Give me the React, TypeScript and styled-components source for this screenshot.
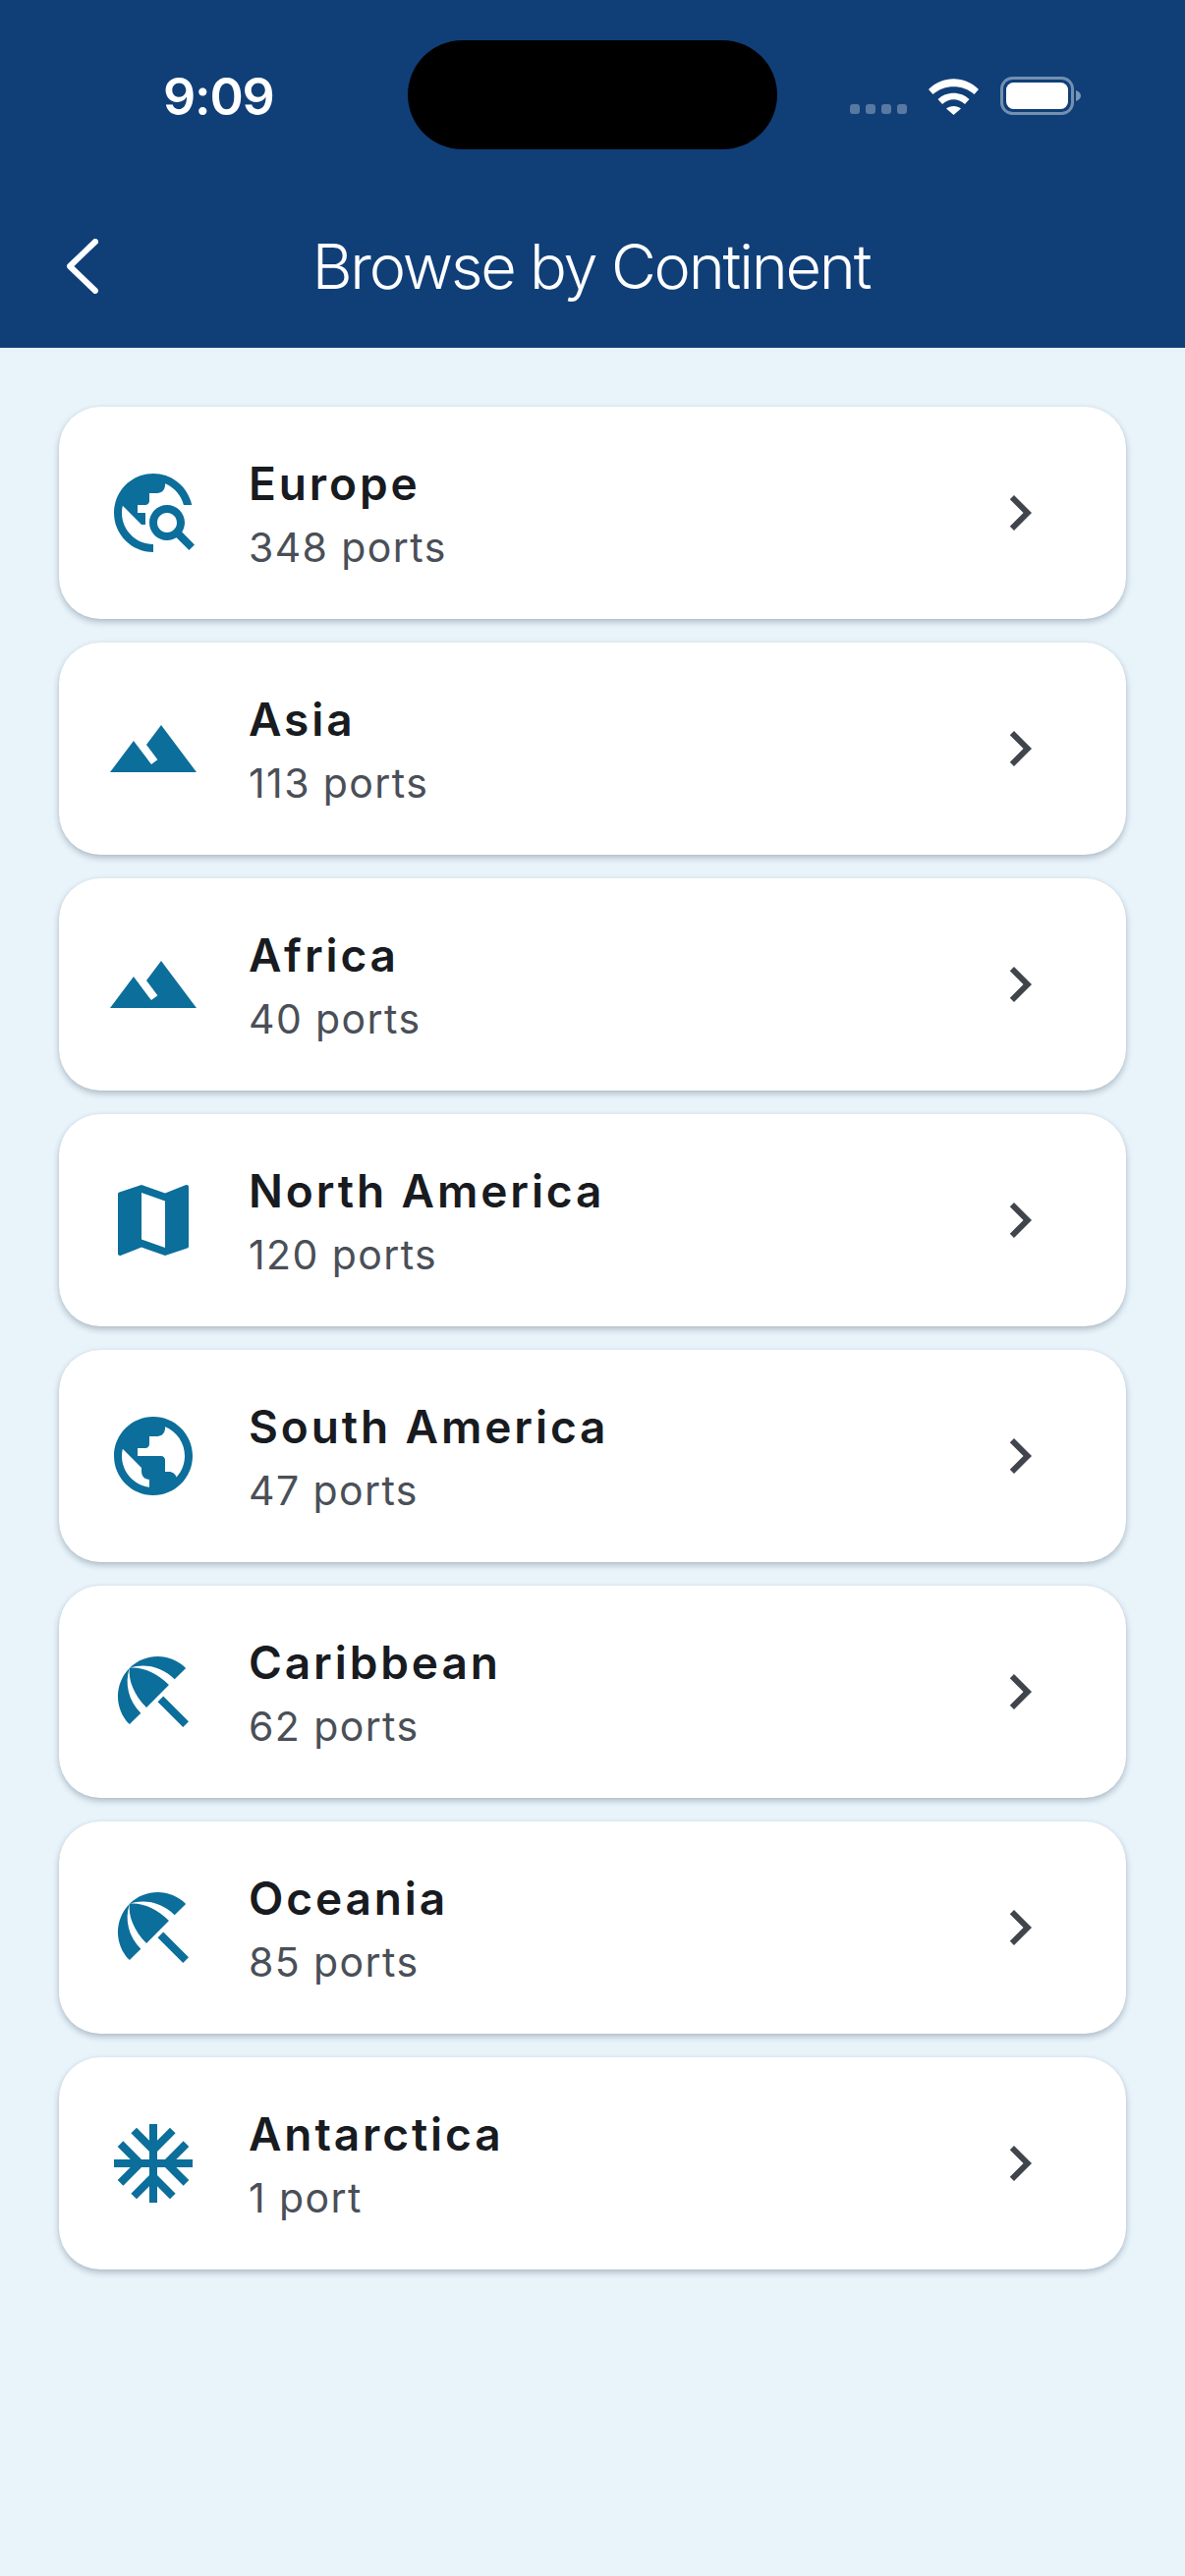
import React from 'react';
import styled, { createGlobalStyle } from 'styled-components';

const ICONS = {
    travelExplore: 'M19.3 16.9c.4-.7.7-1.5.7-2.4 0-2.5-2-4.5-4.5-4.5S11 12 11 14.5s2 4.5 4.5 4.5c.9 0 1.7-.3 2.4-.7l3.2 3.2 1.4-1.4-3.2-3.2zm-3.8.1c-1.4 0-2.5-1.1-2.5-2.5s1.1-2.5 2.5-2.5 2.5 1.1 2.5 2.5-1.1 2.5-2.5 2.5zM12 20v2C6.48 22 2 17.52 2 12S6.48 2 12 2c4.84 0 8.87 3.44 9.8 8h-2.07c-.64-2.46-2.4-4.47-4.73-5.41V5c0 1.1-.9 2-2 2h-2v2c0 .55-.45 1-1 1H8v2h2v3H9l-4.79-4.79C4.08 10.79 4 11.38 4 12c0 4.41 3.59 8 8 8z',
    landscape: 'M14 6l-3.75 5 2.85 3.8-1.6 1.2C9.81 13.75 7 10 7 10l-6 8h22L14 6z',
    map: 'M20.5 3l-.16.03L15 5.1 9 3 3.36 4.9c-.21.07-.36.25-.36.48V20.5c0 .28.22.5.5.5l.16-.03L9 18.9l6 2.1 5.64-1.9c.21-.07.36-.25.36-.48V3.5c0-.28-.22-.5-.5-.5zM15 19l-6-2.11V5l6 2.11V19z',
    publicGlobe: 'M12 2C6.48 2 2 6.48 2 12s4.48 10 10 10 10-4.48 10-10S17.52 2 12 2zm-1 17.93c-3.95-.49-7-3.85-7-7.93 0-.62.08-1.21.21-1.79L9 15v1c0 1.1.9 2 2 2v1.93zm6.9-2.54c-.26-.81-1-1.39-1.9-1.39h-1v-3c0-.55-.45-1-1-1H8v-2h2c.55 0 1-.45 1-1V7h2c1.1 0 2-.9 2-2v-.41c2.93 1.19 5 4.06 5 7.41 0 2.08-.8 3.97-2.1 5.39z',
    beach: 'M13.127 14.56l1.43-1.43 6.44 6.443L19.57 21zm4.293-5.73l2.86-2.86c-3.95-3.95-10.35-3.96-14.3-.02 3.93-1.3 8.31-.25 11.44 2.88zM5.95 5.98c-3.94 3.95-3.93 10.35.02 14.3l2.86-2.86C5.7 14.29 4.65 9.91 5.95 5.98zm.02-.02l-.01.01c-.38 3.01 1.17 6.88 4.3 10.02l5.73-5.73c-3.13-3.13-7.01-4.68-10.02-4.3z',
    snow: 'M22 11h-4.17l3.24-3.24-1.41-1.42L15 11h-2V9l4.66-4.66-1.42-1.41L13 6.17V2h-2v4.17L7.76 2.93 6.34 4.34 11 9v2H9L4.34 6.34 2.93 7.76 6.17 11H2v2h4.17l-3.24 3.24 1.41 1.42L9 13h2v2l-4.66 4.66 1.42 1.41L11 17.83V22h2v-4.17l3.24 3.24 1.42-1.41L13 15v-2h2l4.66 4.66 1.41-1.42L17.83 13H22z',
};

const CHEVRON = 'M10 6L8.59 7.41 13.17 12l-4.58 4.59L10 18l6-6z';

const continents = [
    { name: 'Europe', ports: '348 ports', icon: ICONS.travelExplore },
    { name: 'Asia', ports: '113 ports', icon: ICONS.landscape },
    { name: 'Africa', ports: '40 ports', icon: ICONS.landscape },
    { name: 'North America', ports: '120 ports', icon: ICONS.map },
    { name: 'South America', ports: '47 ports', icon: ICONS.publicGlobe },
    { name: 'Caribbean', ports: '62 ports', icon: ICONS.beach },
    { name: 'Oceania', ports: '85 ports', icon: ICONS.beach },
    { name: 'Antarctica', ports: '1 port', icon: ICONS.snow },
];

const App = () => {
    return (
        <Page>
            <GlobalStyle />
            <Header>
                <StatusBar>
                    <Time>9:09</Time>
                    <Island />
                    <StatusIcons>
                        <SignalDots>
                            <Dot />
                            <Dot />
                            <Dot />
                            <Dot />
                        </SignalDots>
                        <svg width="51" height="37" viewBox="0 0 51 37" fill="#fff">
                            <path d="M0 11C14-3.5 37-3.5 51 11l-4.500 5C35 5.500 16 5.500 4.500 16Z" />
                            <path d="M9.500 21C18 12.500 33 12.500 41.500 21l-4.500 5C30 19.500 21 19.500 14 26Z" />
                            <path d="M18 30.500C22 27 29 27 33 30.500L25.500 37Z" />
                        </svg>
                        <svg width="82" height="39" viewBox="0 0 82 39">
                            <rect x="1.500" y="1.500" width="72" height="36" rx="11" fill="none" stroke="#fff" strokeOpacity=".42" strokeWidth="3" />
                            <rect x="6" y="6" width="63" height="27" rx="7.500" fill="#fff" />
                            <path d="M77 14c3 1 5 3 5 5.500s-2 4.500-5 5.500Z" fill="#fff" fillOpacity=".45" />
                        </svg>
                    </StatusIcons>
                </StatusBar>
                <TitleRow>
                    <BackIcon viewBox="0 0 32 56">
                        <path d="M29 3L3 28l26 25" />
                    </BackIcon>
                    <Title>Browse by Continent</Title>
                </TitleRow>
            </Header>
            <List>
                {continents.map((item) => (
                    <Card key={item.name}>
                        <CardIcon viewBox="0 0 24 24">
                            <path d={item.icon} />
                        </CardIcon>
                        <CardText>
                            <Name>{item.name}</Name>
                            <Ports>{item.ports}</Ports>
                        </CardText>
                        <Arrow viewBox="0 0 24 24">
                            <path d={CHEVRON} />
                        </Arrow>
                    </Card>
                ))}
            </List>
        </Page>
    );
};

export default App;

const GlobalStyle = createGlobalStyle`
 html, body {
    margin: 0;
    padding: 0;
    background: #e8f3fa;
 }
`

const Page = styled.div`
 display: flex;
 flex-direction: column;
 width: 1206px;
 height: 2622px;
 overflow: hidden;
 background: #e8f3fa;
 font-family: "Inter", "Liberation Sans", sans-serif;
`

const Header = styled.header`
 display: flex;
 flex-direction: column;
 height: 354px;
 padding-top: 41px;
 box-sizing: border-box;
 background: #103f78;
 color: #fff;
`

const StatusBar = styled.div`
 display: grid;
 grid-template-columns: 415px 376px 1fr;
 align-items: center;
 height: 111px;
`

const Time = styled.div`
 padding: 4px 0 0 166px;
 font-size: 52px;
 font-weight: 600;
 line-height: 1;
 letter-spacing: -1.2px;
`

const Island = styled.div`
 height: 111px;
 background: #000;
 border-radius: 56px;
`

const StatusIcons = styled.div`
 display: flex;
 align-items: flex-end;
 gap: 22px;
 padding: 0 0 0 74px;
 margin-top: 2px;
`

const SignalDots = styled.div`
 display: flex;
 gap: 6px;
 margin-bottom: 1px;
`

const Dot = styled.span`
 width: 10px;
 height: 10px;
 border-radius: 3px;
 background: rgba(255, 255, 255, 0.3);
`

const TitleRow = styled.div`
 display: grid;
 grid-template-columns: 1fr auto 1fr;
 align-items: center;
 height: 202px;
 padding: 36px 0 0 68px;
 box-sizing: border-box;
`

const BackIcon = styled.svg`
 width: 32px;
 height: 56px;
 fill: none;
 stroke: #fff;
 stroke-width: 6;
 stroke-linecap: round;
 stroke-linejoin: round;
`

const Title = styled.h1`
 margin: 0 0 0 -71px;
 font-size: 63px;
 font-weight: 300;
 line-height: 1;
 letter-spacing: -2.2px;
`

const List = styled.main`
 display: flex;
 flex-direction: column;
 gap: 24px;
 padding: 60px 60px 0;
`

const Card = styled.div`
 display: flex;
 align-items: center;
 height: 216px;
 padding: 0 72px 0 48px;
 box-sizing: border-box;
 background: #fff;
 border-radius: 42px;
 box-shadow: 0 3px 6px rgba(40, 60, 80, 0.3), 0 0 2px rgba(40, 60, 80, 0.06);
`

const CardIcon = styled.svg`
 flex: none;
 width: 96px;
 height: 96px;
 fill: #0c6e9a;
`

const CardText = styled.div`
 flex: 1;
 display: flex;
 flex-direction: column;
 gap: 12px;
 margin: 2px 0 0 49px;
`

const Name = styled.div`
 font-size: 46px;
 font-weight: 600;
 line-height: 56px;
 letter-spacing: 2.9px;
 color: #181b1f;
`

const Ports = styled.div`
 font-size: 41px;
 font-weight: 400;
 line-height: 50px;
 letter-spacing: 1.4px;
 color: #4a4f57;
`

const Arrow = styled.svg`
 flex: none;
 width: 72px;
 height: 72px;
 fill: #40454c;
`
